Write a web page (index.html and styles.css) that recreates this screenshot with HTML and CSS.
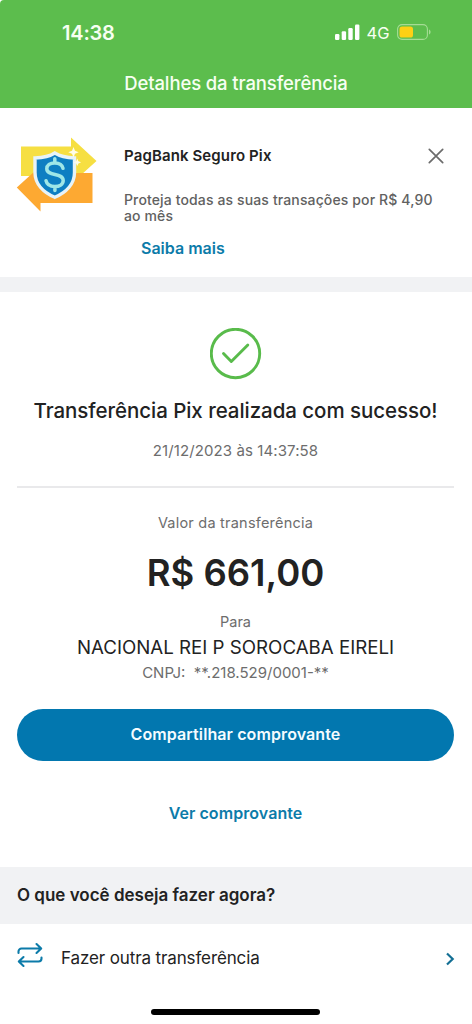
FILE: index.html
```html
<!DOCTYPE html>
<html lang="pt-BR">
<head>
<meta charset="utf-8">
<title>Detalhes da transferência</title>
<link rel="stylesheet" href="styles.css">
</head>
<body>
<div class="screen">
  <header class="header">
    <div class="status">
      <span class="clock">14:38</span>
      <div class="status-right">
        <svg class="signal" width="25" height="16" viewBox="0 0 25 16" fill="#fff"><rect x="0" y="10" width="4.4" height="6" rx="1.2"/><rect x="6.7" y="7.3" width="4.4" height="8.7" rx="1.2"/><rect x="13.3" y="4" width="4.4" height="12" rx="1.2"/><rect x="20" y="0.5" width="4.4" height="15.500" rx="1.2"/></svg>
        <span class="network">4G</span>
        <svg class="battery" width="34" height="16" viewBox="0 0 34 16"><rect x=".6" y=".6" width="29.800" height="14.800" rx="4.500" fill="none" stroke="#a5dc95" stroke-width="1.100"/><rect x="2.500" y="2.500" width="13.500" height="11" rx="2.600" fill="#fdd015"/><path d="M32 5.500c2.100.8 2.100 4.200 0 5z" fill="#a5dc95"/></svg>
      </div>
    </div>
    <h1 class="title">Detalhes da transferência</h1>
  </header>

  <section class="promo">
    <svg class="promo-art" width="82" height="76" viewBox="0 0 82 76">
      <path d="M5 8.500h50V-.5L80.500 23 55 46V38H5z" fill="#f6df42"/>
      <path d="M76.500 35v30H24.500v8.500L.8 49.500 24.500 28v7z" fill="#fda932"/>
      <path d="M38.800 15c-5 3.200-12 4.700-19.800 5v14.500C19 46 27.500 54.500 38.800 59.300 50 54.500 58.500 46 58.500 34.500V20c-7.500-.3-14.500-1.800-19.700-5z" fill="#0e7ec2" stroke="#e7f3f8" stroke-width="3.400"/>
      <path d="M47 30.300c-.8-3.600-4-5.400-8.200-5.400-4.700 0-8 2.200-8 5.900 0 8 16.400 3.500 16.400 11.700 0 3.900-3.700 6-8.400 6-4.800 0-8-2.100-8.800-5.800M38.800 20.800v4M38.900 48.500v4" fill="none" stroke="#9fe6e7" stroke-width="3.500" stroke-linecap="round"/>
      <path d="M57.500 9l1.500 3.700 3.700 1.500-3.700 1.500-1.500 3.700-1.500-3.700-3.700-1.500 3.700-1.500zM61.300 20.500l1.100 2.700 2.700 1.100-2.700 1.100-1.100 2.700-1.100-2.700-2.700-1.100 2.700-1.100z" fill="#fffde8"/>
    </svg>
    <div class="promo-body">
      <h2 class="promo-title">PagBank Seguro Pix</h2>
      <p class="promo-text">Proteja todas as suas transações por R$ 4,90<br>ao mês</p>
      <a class="promo-link">Saiba mais</a>
    </div>
    <svg class="close" width="16" height="16" viewBox="0 0 16 16"><path d="M1.300 1.300l13.400 13.400M14.700 1.300L1.300 14.700" fill="none" stroke="#6c6c6c" stroke-width="1.700" stroke-linecap="round"/></svg>
  </section>

  <main class="receipt">
    <svg class="check" width="52" height="52" viewBox="0 0 52 52" fill="none" stroke="#59bb4b"><circle cx="25.500" cy="25.500" r="24.200" stroke-width="2.900"/><path d="M13.500 25.500l7.800 8L37.800 17" stroke-width="2.900" stroke-linecap="round" stroke-linejoin="round"/></svg>
    <p class="success">Transferência Pix realizada com sucesso!</p>
    <p class="date">21/12/2023 às 14:37:58</p>
    <hr class="divider">
    <p class="label">Valor da transferência</p>
    <p class="amount">R$ 661,00</p>
    <p class="to">Para</p>
    <p class="payee">NACIONAL REI P SOROCABA EIRELI</p>
    <p class="cnpj">CNPJ:&nbsp; **.218.529/0001-**</p>
    <a class="share">Compartilhar comprovante</a>
    <a class="view">Ver comprovante</a>
  </main>

  <h2 class="next">O que você deseja fazer agora?</h2>
  <div class="action">
    <svg class="repeat" width="26" height="26" viewBox="0 0 26 26" fill="none" stroke="#0c7ba9" stroke-width="2.100" stroke-linecap="round" stroke-linejoin="round"><path d="M1.500 11V9.500a3 3 0 0 1 3-3H24M19.500 2l4.700 4.500-4.700 4.500M24.500 15.500V16.500a3 3 0 0 1-3 3H2M6.500 15l-4.700 4.500L6.500 24"/></svg>
    <span class="action-text">Fazer outra transferência</span>
    <svg class="chevron" width="9" height="14" viewBox="0 0 9 14"><path d="M1 1.500L6.700 7 1 12.500" fill="none" stroke="#136f94" stroke-width="2.200"/></svg>
  </div>
  <div class="home"></div>
</div>
</body>
</html>
```
FILE: styles.css
```css
* { box-sizing: border-box; margin: 0; padding: 0; }
body { background: #fff; font-family: Inter, "Liberation Sans", sans-serif; color: #222; white-space: nowrap; }
.screen { display: flex; flex-direction: column; width: 472px; height: 1024px; overflow: hidden; }
.header { height: 107.5px; border-top-left-radius: 4px; background: #5cbd4d; color: #f7fff2; }
.status { display: flex; justify-content: space-between; align-items: center; height: 60px; padding: 4px 41.5px 0 62px; }
.clock { font-size: 20px; font-weight: 600; line-height: 24px; margin-top: 1px; letter-spacing: -.2px; }
.status-right { display: flex; align-items: center; }
.network { margin: 2px 7px 0 7px; font-size: 16.5px; line-height: 20px; }
.title { text-align: center; font-size: 18.5px; font-weight: 500; line-height: 24px; margin-top: 11px; letter-spacing: -.12px; }
.promo { display: flex; height: 184.5px; padding: 30px 28px 0 16px; border-bottom: 15px solid #f1f2f4; }
.promo-art { flex: none; overflow: visible; }
.promo-body { flex: 1; min-width: 0; padding: 8px 0 0 26px; }
.promo-title { font-size: 15px; font-weight: 600; line-height: 20px; letter-spacing: .12px; }
.promo-text { margin-top: 26px; font-size: 14px; font-weight: 450; line-height: 16.5px; color: #616161; letter-spacing: .13px; }
.promo-link { display: block; margin: 12px 0 0 17px; font-size: 16px; font-weight: 600; line-height: 22px; color: #0c7ba9; }
.close { margin-top: 10px; }
.receipt { display: flex; flex-direction: column; align-items: center; height: 575px; padding: 36px 18px 0 17px; }
.success { margin-top: 17px; font-size: 20.5px; font-weight: 500; line-height: 28px; letter-spacing: -.05px; }
.date { margin-top: 16px; font-size: 15px; line-height: 20px; color: #6d6d6d; letter-spacing: .1px; }
.divider { align-self: stretch; margin-top: 25px; border: 0; height: 2px; background: #e9e9eb; }
.label { margin-top: 25px; font-size: 14.5px; line-height: 20px; color: #6d6d6d; letter-spacing: .22px; }
.amount { margin-top: 17px; font-size: 36.5px; font-weight: 600; line-height: 46px; }
.to { margin-top: 16px; font-size: 14.5px; line-height: 20px; color: #6d6d6d; }
.payee { margin-top: 4px; font-size: 18.7px; line-height: 24px; }
.cnpj { margin-top: 3px; font-size: 15px; line-height: 20px; color: #6d6d6d; }
.share { align-self: stretch; margin-top: 26px; height: 52px; border-radius: 26px; background: #0277af; color: #f5fcff; text-align: center; font-size: 16px; font-weight: 600; line-height: 51px; letter-spacing: .1px; }
.view { margin-top: 41px; font-size: 16px; font-weight: 600; line-height: 22px; color: #0c7ba9; letter-spacing: .07px; }
.next { height: 57px; padding-left: 17px; background: #f1f2f4; font-size: 17px; font-weight: 600; line-height: 57px; }
.action { display: flex; align-items: center; height: 69px; padding: 0 17px; }
.repeat { margin-top: -7px; }
.action-text { flex: 1; margin-top: -1px; padding-left: 18px; font-size: 17px; line-height: 24px; letter-spacing: -.12px; }
.home { align-self: center; width: 169px; height: 5.500px; margin: 16px 1px 0 0; border-radius: 3px; background: #000; }
```
